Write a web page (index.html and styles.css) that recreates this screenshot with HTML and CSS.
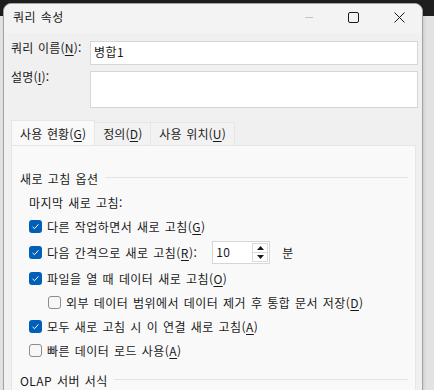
FILE: index.html
```html
<!DOCTYPE html>
<html lang="ko">
<head>
  <meta charset="UTF-8">
  <title>쿼리 속성</title>
  <link rel="stylesheet" href="styles.css">
</head>
<body>
  <div class="window">
    <div class="titlebar">
      <span class="title">쿼리 속성</span>
      <div class="controls">
        <span class="ctl ctl--min">
          <svg width="10" height="10" viewBox="0 0 10 10"><path d="M1 5.5 H9" stroke="#c4c4c4" stroke-width="1"/></svg>
        </span>
        <span class="ctl ctl--max">
          <svg width="11" height="11" viewBox="0 0 11 11"><rect x="0.5" y="0.5" width="10" height="10" rx="1.5" fill="none" stroke="#1b1b1b" stroke-width="1"/></svg>
        </span>
        <span class="ctl ctl--close">
          <svg width="11" height="11" viewBox="0 0 11 11"><path d="M0.5 0.5 L10.5 10.5 M10.5 0.5 L0.5 10.5" stroke="#1b1b1b" stroke-width="1"/></svg>
        </span>
      </div>
    </div>

    <div class="content">
      <div class="form">
        <label class="form__label">쿼리 이름(<u>N</u>):</label>
        <div class="form__input">병합1</div>
        <label class="form__label form__label--desc">설명(<u>I</u>):</label>
        <div class="form__textarea"></div>
      </div>

      <div class="tabs">
        <span class="tab tab--active">사용 현황(<u>G</u>)</span>
        <span class="tab">정의(<u>D</u>)</span>
        <span class="tab">사용 위치(<u>U</u>)</span>
      </div>

      <div class="panel">
        <div class="group-title"><span>새로 고침 옵션</span><span class="group-title__line"></span></div>
        <div class="row">마지막 새로 고침:</div>

        <div class="row">
          <span class="check check--on"><svg width="13" height="13" viewBox="0 0 13 13"><path d="M3.6 6.9 L5.5 8.7 L9.4 4.4" fill="none" stroke="#fff" stroke-width="1"/></svg></span>
          다른 작업하면서 새로 고침(<u>G</u>)
        </div>

        <div class="row row--spin">
          <span class="check check--on"><svg width="13" height="13" viewBox="0 0 13 13"><path d="M3.6 6.9 L5.5 8.7 L9.4 4.4" fill="none" stroke="#fff" stroke-width="1"/></svg></span>
          다음 간격으로 새로 고침(<u>R</u>):
          <span class="spin">
            <span class="spin__value">10</span>
            <span class="spin__buttons">
              <span class="spin__btn"><svg width="7" height="4" viewBox="0 0 7 4"><path d="M0 4 L3.5 0 L7 4 Z" fill="#1b1b1b"/></svg></span>
              <span class="spin__btn"><svg width="7" height="4" viewBox="0 0 7 4"><path d="M0 0 L3.5 4 L7 0 Z" fill="#1b1b1b"/></svg></span>
            </span>
          </span>
          <span class="unit">분</span>
        </div>

        <div class="row">
          <span class="check check--on"><svg width="13" height="13" viewBox="0 0 13 13"><path d="M3.6 6.9 L5.5 8.7 L9.4 4.4" fill="none" stroke="#fff" stroke-width="1"/></svg></span>
          파일을 열 때 데이터 새로 고침(<u>O</u>)
        </div>

        <div class="row row--sub">
          <span class="check"></span>
          외부 데이터 범위에서 데이터 제거 후 통합 문서 저장(<u>D</u>)
        </div>

        <div class="row">
          <span class="check check--on"><svg width="13" height="13" viewBox="0 0 13 13"><path d="M3.6 6.9 L5.5 8.7 L9.4 4.4" fill="none" stroke="#fff" stroke-width="1"/></svg></span>
          모두 새로 고침 시 이 연결 새로 고침(<u>A</u>)
        </div>

        <div class="row">
          <span class="check"></span>
          빠른 데이터 로드 사용(<u>A</u>)
        </div>

        <div class="group-title group-title--olap"><span>OLAP 서버 서식</span><span class="group-title__line"></span></div>
      </div>
    </div>
  </div>
</body>
</html>
```

FILE: styles.css
```css
html, body {
  margin: 0;
  height: 390px;
  overflow: hidden;
}

body {
  background: linear-gradient(#1e1e1e 0 16px, #e2e2e2 16px);
  font-family: "Noto Sans CJK KR", "Noto Sans", sans-serif;
  font-size: 12px;
  letter-spacing: 0.45px;
  word-spacing: 1px;
  color: #1a1a1a;
}

u {
  text-decoration-thickness: 1px;
  text-underline-offset: 2px;
}

.window {
  margin: 3px 0 0 3px;
  width: 418px;
  height: 420px;
  background: #f0f0f0;
  border: 1px solid #a3a3a3;
  border-radius: 8px 8px 0 0;
  box-shadow: 1px 0 3px rgba(0, 0, 0, 0.12);
}

/* title bar */
.titlebar {
  display: flex;
  align-items: flex-start;
  height: 29px;
  padding: 4px 0 0 9px;
  box-sizing: border-box;
  background: #f3f3f3;
  border-radius: 8px 8px 0 0;
}

.title {
  line-height: 18px;
}

.controls {
  display: flex;
  margin-left: auto;
}

.ctl {
  display: flex;
  align-items: center;
  justify-content: center;
  height: 18px;
  width: 46px;
}

.ctl--min {
  margin-right: -2px;
}

/* form */
.content {
  padding: 8px 4px 0 7px;
}

.form {
  display: grid;
  grid-template-columns: 79px 1fr;
  row-gap: 6px;
}

.form__label {
  line-height: 16px;
  margin-top: -1px;
  letter-spacing: 0.2px;
}

.form__label--desc {
  margin-top: -2px;
}

.form__input,
.form__textarea {
  background: #fff;
  border: 1px solid #d6d6d6;
  box-sizing: border-box;
}

.form__input {
  height: 24px;
  padding: 0 3px;
  line-height: 19px;
}

.form__textarea {
  height: 37px;
}

/* tabs */
.tabs {
  display: flex;
  align-items: flex-end;
  height: 25px;
  margin-top: 12px;
}

.tab {
  height: 23px;
  box-sizing: border-box;
  padding: 0 8px 0 8px;
  line-height: 21px;
  letter-spacing: 0.15px;
  background: #f2f2f2;
  border: 1px solid #e6e6e6;
  border-bottom: none;
  border-left: none;
}

.tab--active {
  height: 25px;
  line-height: 26px;
  background: #f9f9f9;
  border-left: 1px solid #e6e6e6;
}

.panel {
  margin-right: 2px;
  height: 260px;
  padding: 20px 7px 0 8px;
  background: #f9f9f9;
  border: 1px solid #e6e6e6;
}

.group-title {
  display: flex;
  align-items: center;
  height: 24px;
}

.group-title__line {
  flex: 1;
  height: 1px;
  margin: -2px 0 0 6px;
  background: #e3e3e3;
}

.group-title--olap {
  margin-top: 6px;
}

.row {
  display: flex;
  align-items: center;
  height: 24px;
  padding-left: 9px;
}

.row--spin {
  height: 28px;
}

.row--sub {
  padding-left: 28px;
}

.check {
  display: inline-flex;
  width: 13px;
  height: 13px;
  margin-right: 5px;
  box-sizing: border-box;
  border: 1px solid #8c8c8c;
  border-radius: 3px;
  background: #f7f7f7;
}

.check--on {
  border: none;
  background: #005fb8;
}

.spin {
  display: flex;
  width: 58px;
  height: 23px;
  margin-left: 15px;
  box-sizing: border-box;
  background: #fff;
  border: 1px solid #d6d6d6;
}

.spin__value {
  flex: 1;
  padding-left: 3px;
  line-height: 20px;
}

.spin__buttons {
  display: flex;
  flex-direction: column;
  width: 16px;
  padding: 1px 1px 1px 0;
}

.spin__btn {
  flex: 1;
  display: flex;
  align-items: center;
  justify-content: center;
  border: 1px solid #dadada;
}

.spin__btn + .spin__btn {
  border-top: none;
}

.unit {
  margin-left: 12px;
}
```
